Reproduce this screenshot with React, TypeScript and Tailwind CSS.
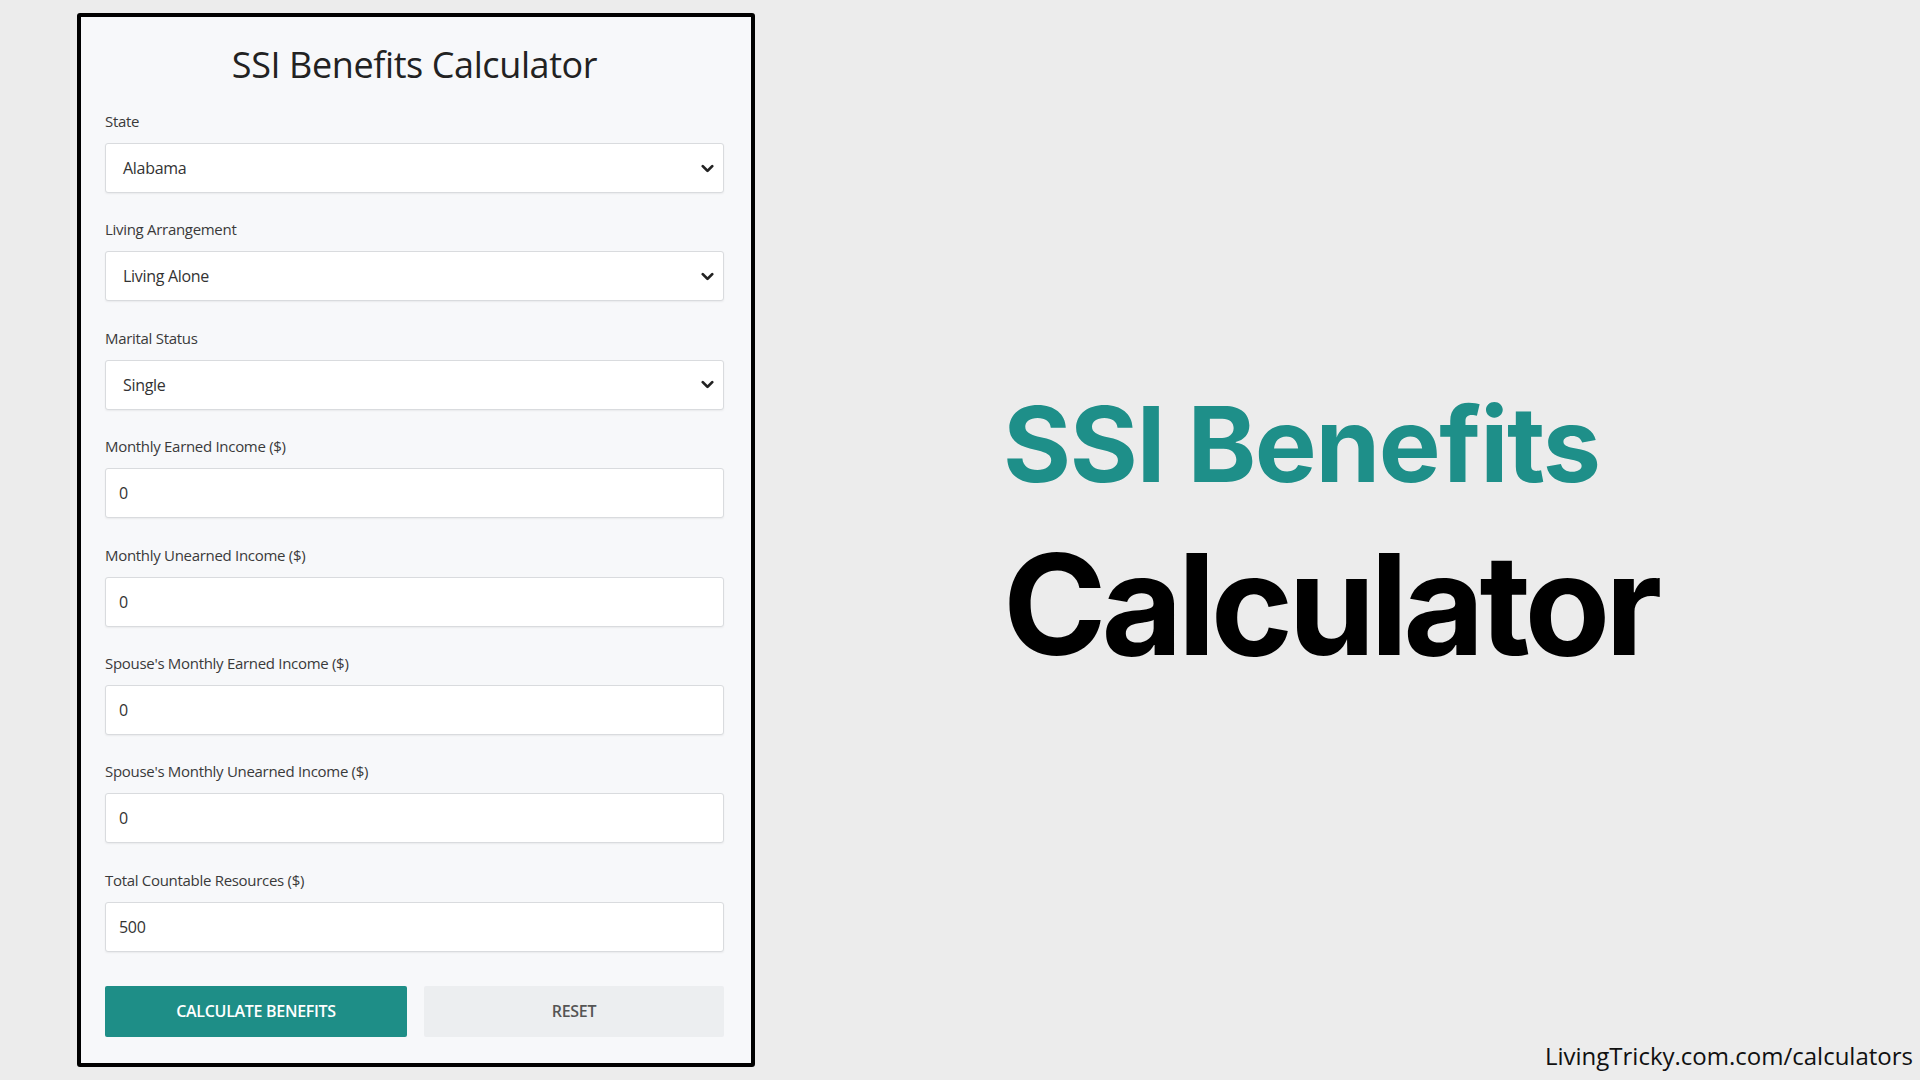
import { ChevronDown } from "lucide-react";

interface Field {
  label: string;
  value: string;
  select?: boolean;
}

const FIELDS: Field[] = [
  { label: "State", value: "Alabama", select: true },
  { label: "Living Arrangement", value: "Living Alone", select: true },
  { label: "Marital Status", value: "Single", select: true },
  { label: "Monthly Earned Income ($)", value: "0" },
  { label: "Monthly Unearned Income ($)", value: "0" },
  { label: "Spouse's Monthly Earned Income ($)", value: "0" },
  { label: "Spouse's Monthly Unearned Income ($)", value: "0" },
  { label: "Total Countable Resources ($)", value: "500" },
];

function FormField({ field }: { field: Field }) {
  return (
    <div className="flex flex-col">
      <label className="mb-[12px] text-[15px] leading-[20px] tracking-[-0.3px] text-[#3a3a3a]">{field.label}</label>
      <div className="flex h-[50px] items-center justify-between rounded-[3px] border border-[#d9dbde] bg-white shadow-[0_1px_2px_rgba(0,0,0,0.06)]">
        <span className={field.select ? "pl-[17px] text-[16px] tracking-[-0.3px] text-[#333]" : "pl-[13px] text-[16px] tracking-[-0.3px] text-[#333]"}>
          {field.value}
        </span>
        {field.select && <ChevronDown className="mr-[6px] h-[19px] w-[19px] text-[#222]" strokeWidth={3.5} />}
      </div>
    </div>
  );
}

export default function App() {
  return (
    <div className="flex h-[1080px] w-[1920px] bg-[#ececec] font-['Open_Sans',sans-serif]">
      <div className="ml-[77px] mt-[13px] h-[1054px] w-[678px] shrink-0 rounded-[3px] border-[4px] border-black bg-[#f7f8fa] pl-[24px] pr-[27px] pt-[28px]">
        <h1 className="text-center text-[36px] leading-[40px] tracking-[-0.4px] text-[#222]">SSI Benefits Calculator</h1>
        <div className="mt-[26px] flex flex-col gap-[26.4px]">
          {FIELDS.map((f) => (
            <FormField key={f.label} field={f} />
          ))}
        </div>
        <div className="mt-[34px] flex gap-[17px]">
          <button className="h-[51px] w-[302px] rounded-[2px] bg-[#1e8e87] text-[16px] font-semibold uppercase tracking-[-0.3px] text-white">
            Calculate Benefits
          </button>
          <button className="h-[51px] flex-1 rounded-[2px] bg-[#eceef0] text-[16px] font-semibold uppercase tracking-[-0.3px] text-[#555]">
            Reset
          </button>
        </div>
      </div>

      <div className="flex flex-1 flex-col">
        <div className="flex flex-1 flex-col justify-center pl-[248px] pt-[28px]">
          <div className="font-['Inter',sans-serif] text-[104px] font-bold leading-[120px] tracking-[-1.4px] text-[#1e8f89]">
            SSI Benefits
          </div>
          <div className="mt-[20px] font-['Inter',sans-serif] text-[140px] font-bold leading-[160px] tracking-[-5px] text-black">
            Calculator
          </div>
        </div>
        <div className="pb-[8px] pr-[7px] text-right text-[24px] leading-[32px] text-[#111]">LivingTricky.com.com/calculators</div>
      </div>
    </div>
  );
}
